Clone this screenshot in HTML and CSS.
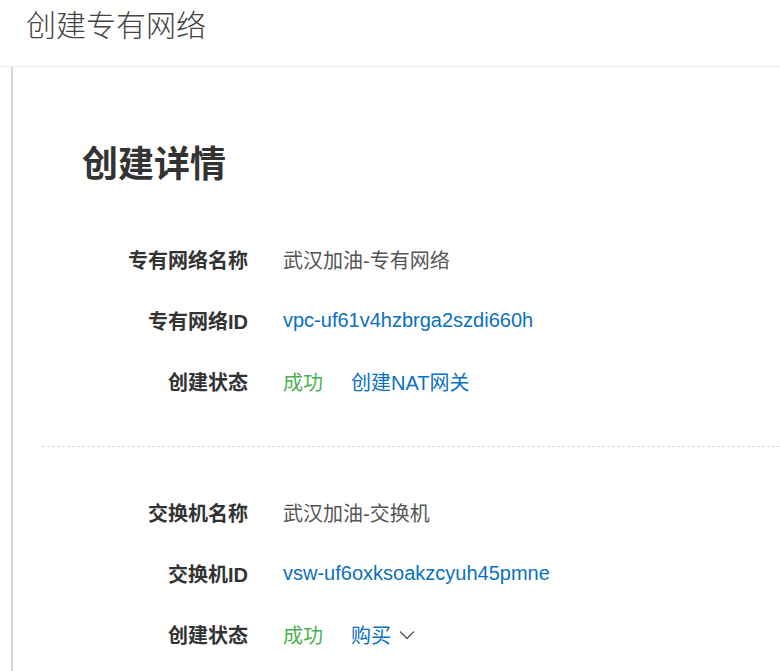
FILE: index.html
```html
<!DOCTYPE html>
<html lang="zh">
<head>
    <meta charset="UTF-8">
    <title>创建专有网络</title>
    <link rel="stylesheet" href="styles.css">
</head>
<body>
    <div class="page-header">
        <div class="page-title">创建专有网络</div>
    </div>

    <div class="main">
        <h1 class="detail-title">创建详情</h1>

        <div class="info-list">
            <div class="info-row">
                <div class="info-label">专有网络名称</div>
                <div class="info-value">武汉加油-专有网络</div>
            </div>
            <div class="info-row">
                <div class="info-label">专有网络ID</div>
                <div class="info-value"><a class="link" href="#">vpc-uf61v4hzbrga2szdi660h</a></div>
            </div>
            <div class="info-row">
                <div class="info-label">创建状态</div>
                <div class="info-value">
                    <span class="status-ok">成功</span>
                    <a class="link action" href="#">创建NAT网关</a>
                </div>
            </div>
        </div>

        <div class="divider"></div>

        <div class="info-list">
            <div class="info-row">
                <div class="info-label">交换机名称</div>
                <div class="info-value">武汉加油-交换机</div>
            </div>
            <div class="info-row">
                <div class="info-label">交换机ID</div>
                <div class="info-value"><a class="link" href="#">vsw-uf6oxksoakzcyuh45pmne</a></div>
            </div>
            <div class="info-row">
                <div class="info-label">创建状态</div>
                <div class="info-value">
                    <span class="status-ok">成功</span>
                    <a class="link action" href="#">购买</a>
                    <svg class="chevron" width="16" height="10" viewBox="0 0 16 10">
                        <polyline points="1,1.5 8,8.5 15,1.5" fill="none" stroke="#555" stroke-width="1.3"/>
                    </svg>
                </div>
            </div>
        </div>
    </div>
</body>
</html>
```

FILE: styles.css
```css
body {
    margin: 0;
    font-family: 'Liberation Sans', 'Noto Sans CJK SC', sans-serif;
    background: white;
    color: #333;
}

.page-header {
    height: 66px;
    border-bottom: 1px solid #ebebeb;
}

.page-title {
    padding-left: 26px;
    font-size: 30px;
    line-height: 51px;
    font-weight: 300;
    color: #444;
}

.main {
    margin-left: 11px;
    border-left: 2px solid #d6d6d6;
    min-height: 620px;
    overflow: hidden;
}

.detail-title {
    margin: 76px 0 0 69px;
    font-size: 36px;
    line-height: 44px;
    font-weight: bold;
    color: #333;
}

.info-list {
    margin-top: 42px;
}

.info-row {
    display: flex;
    align-items: center;
    height: 61px;
    font-size: 20px;
}

.info-label {
    width: 235px;
    text-align: right;
    font-weight: bold;
    color: #333;
}

.info-value {
    margin-left: 35px;
    display: flex;
    align-items: center;
    color: #555;
}

.link {
    color: #0a70c2;
    text-decoration: none;
}

.status-ok {
    color: #4caf50;
}

.action {
    margin-left: 28px;
}

.chevron {
    margin-left: 8px;
}

.divider {
    margin: 34px 0 35px 29px;
    border-top: 1px dashed #dcdcdc;
}

.divider + .info-list {
    margin-top: 0;
}
```
